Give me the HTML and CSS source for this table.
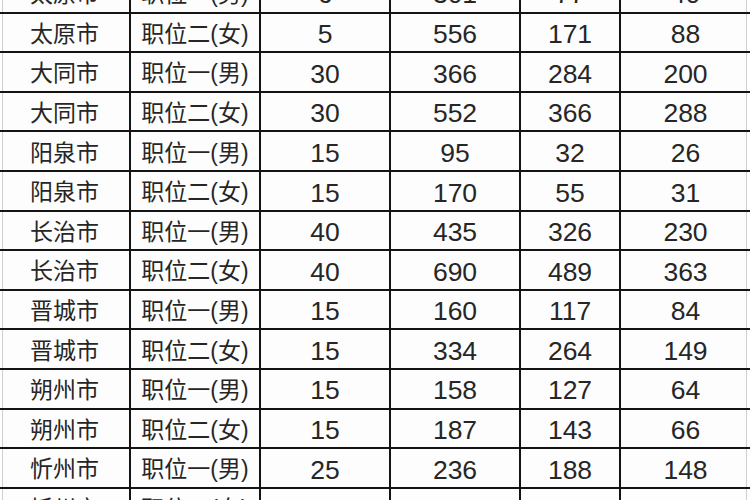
FILE: index.html
```html
<!DOCTYPE html>
<html lang="zh-CN">
<head>
<meta charset="utf-8">
<title>职位报名统计</title>
<link rel="stylesheet" href="styles.css">
</head>
<body>
<div class="sheet">
<table class="grid">
<colgroup>
<col class="c-city"><col class="c-post"><col class="c-num"><col class="c-num"><col class="c-mid"><col class="c-last">
</colgroup>
<tbody>
<tr><td>太原市</td><td>职位一(男)</td><td>6</td><td>301</td><td>77</td><td>40</td></tr>
<tr><td>太原市</td><td>职位二(女)</td><td>5</td><td>556</td><td>171</td><td>88</td></tr>
<tr><td>大同市</td><td>职位一(男)</td><td>30</td><td>366</td><td>284</td><td>200</td></tr>
<tr><td>大同市</td><td>职位二(女)</td><td>30</td><td>552</td><td>366</td><td>288</td></tr>
<tr><td>阳泉市</td><td>职位一(男)</td><td>15</td><td>95</td><td>32</td><td>26</td></tr>
<tr><td>阳泉市</td><td>职位二(女)</td><td>15</td><td>170</td><td>55</td><td>31</td></tr>
<tr><td>长治市</td><td>职位一(男)</td><td>40</td><td>435</td><td>326</td><td>230</td></tr>
<tr><td>长治市</td><td>职位二(女)</td><td>40</td><td>690</td><td>489</td><td>363</td></tr>
<tr><td>晋城市</td><td>职位一(男)</td><td>15</td><td>160</td><td>117</td><td>84</td></tr>
<tr><td>晋城市</td><td>职位二(女)</td><td>15</td><td>334</td><td>264</td><td>149</td></tr>
<tr><td>朔州市</td><td>职位一(男)</td><td>15</td><td>158</td><td>127</td><td>64</td></tr>
<tr><td>朔州市</td><td>职位二(女)</td><td>15</td><td>187</td><td>143</td><td>66</td></tr>
<tr><td>忻州市</td><td>职位一(男)</td><td>25</td><td>236</td><td>188</td><td>148</td></tr>
<tr><td>忻州市</td><td>职位二(女)</td><td>15</td><td>194</td><td>147</td><td>124</td></tr>
</tbody>
</table>
</div>
</body>
</html>
```
FILE: styles.css
```css
html, body {
  margin: 0;
  padding: 0;
  background: #fdfdfd;
}
.sheet {
  width: 750px;
  height: 500px;
  overflow: hidden;
}
.grid {
  width: 750px;
  margin-top: -27px;
  border-collapse: collapse;
  table-layout: fixed;
  font-family: "Liberation Sans", "Noto Sans CJK SC", sans-serif;
  font-size: 26.5px;
  color: #262626;
}
.c-city { width: 130px; }
.c-post { width: 130px; }
.c-num { width: 130px; }
.c-mid { width: 100px; }
.c-last { width: 130px; }
.grid td {
  height: 39.6px;
  padding: 4px 0 0 0;
  box-sizing: border-box;
  text-align: center;
  vertical-align: middle;
  line-height: 1;
  white-space: nowrap;
  border: 2px solid #141414;
}
.grid tr:first-child td { border-top: none; }
.grid td:first-child {
  border-left: none;
  background: linear-gradient(to right, #fff 2px, #cfcfcf 2px, #cfcfcf 3px, transparent 3px);
}
.grid td:last-child {
  border-right: none;
  background: linear-gradient(to left, #fff 3px, #cfcfcf 3px, #cfcfcf 4px, transparent 4px);
}
.grid td:nth-child(-n+2) {
  font-size: 23px;
}
```
